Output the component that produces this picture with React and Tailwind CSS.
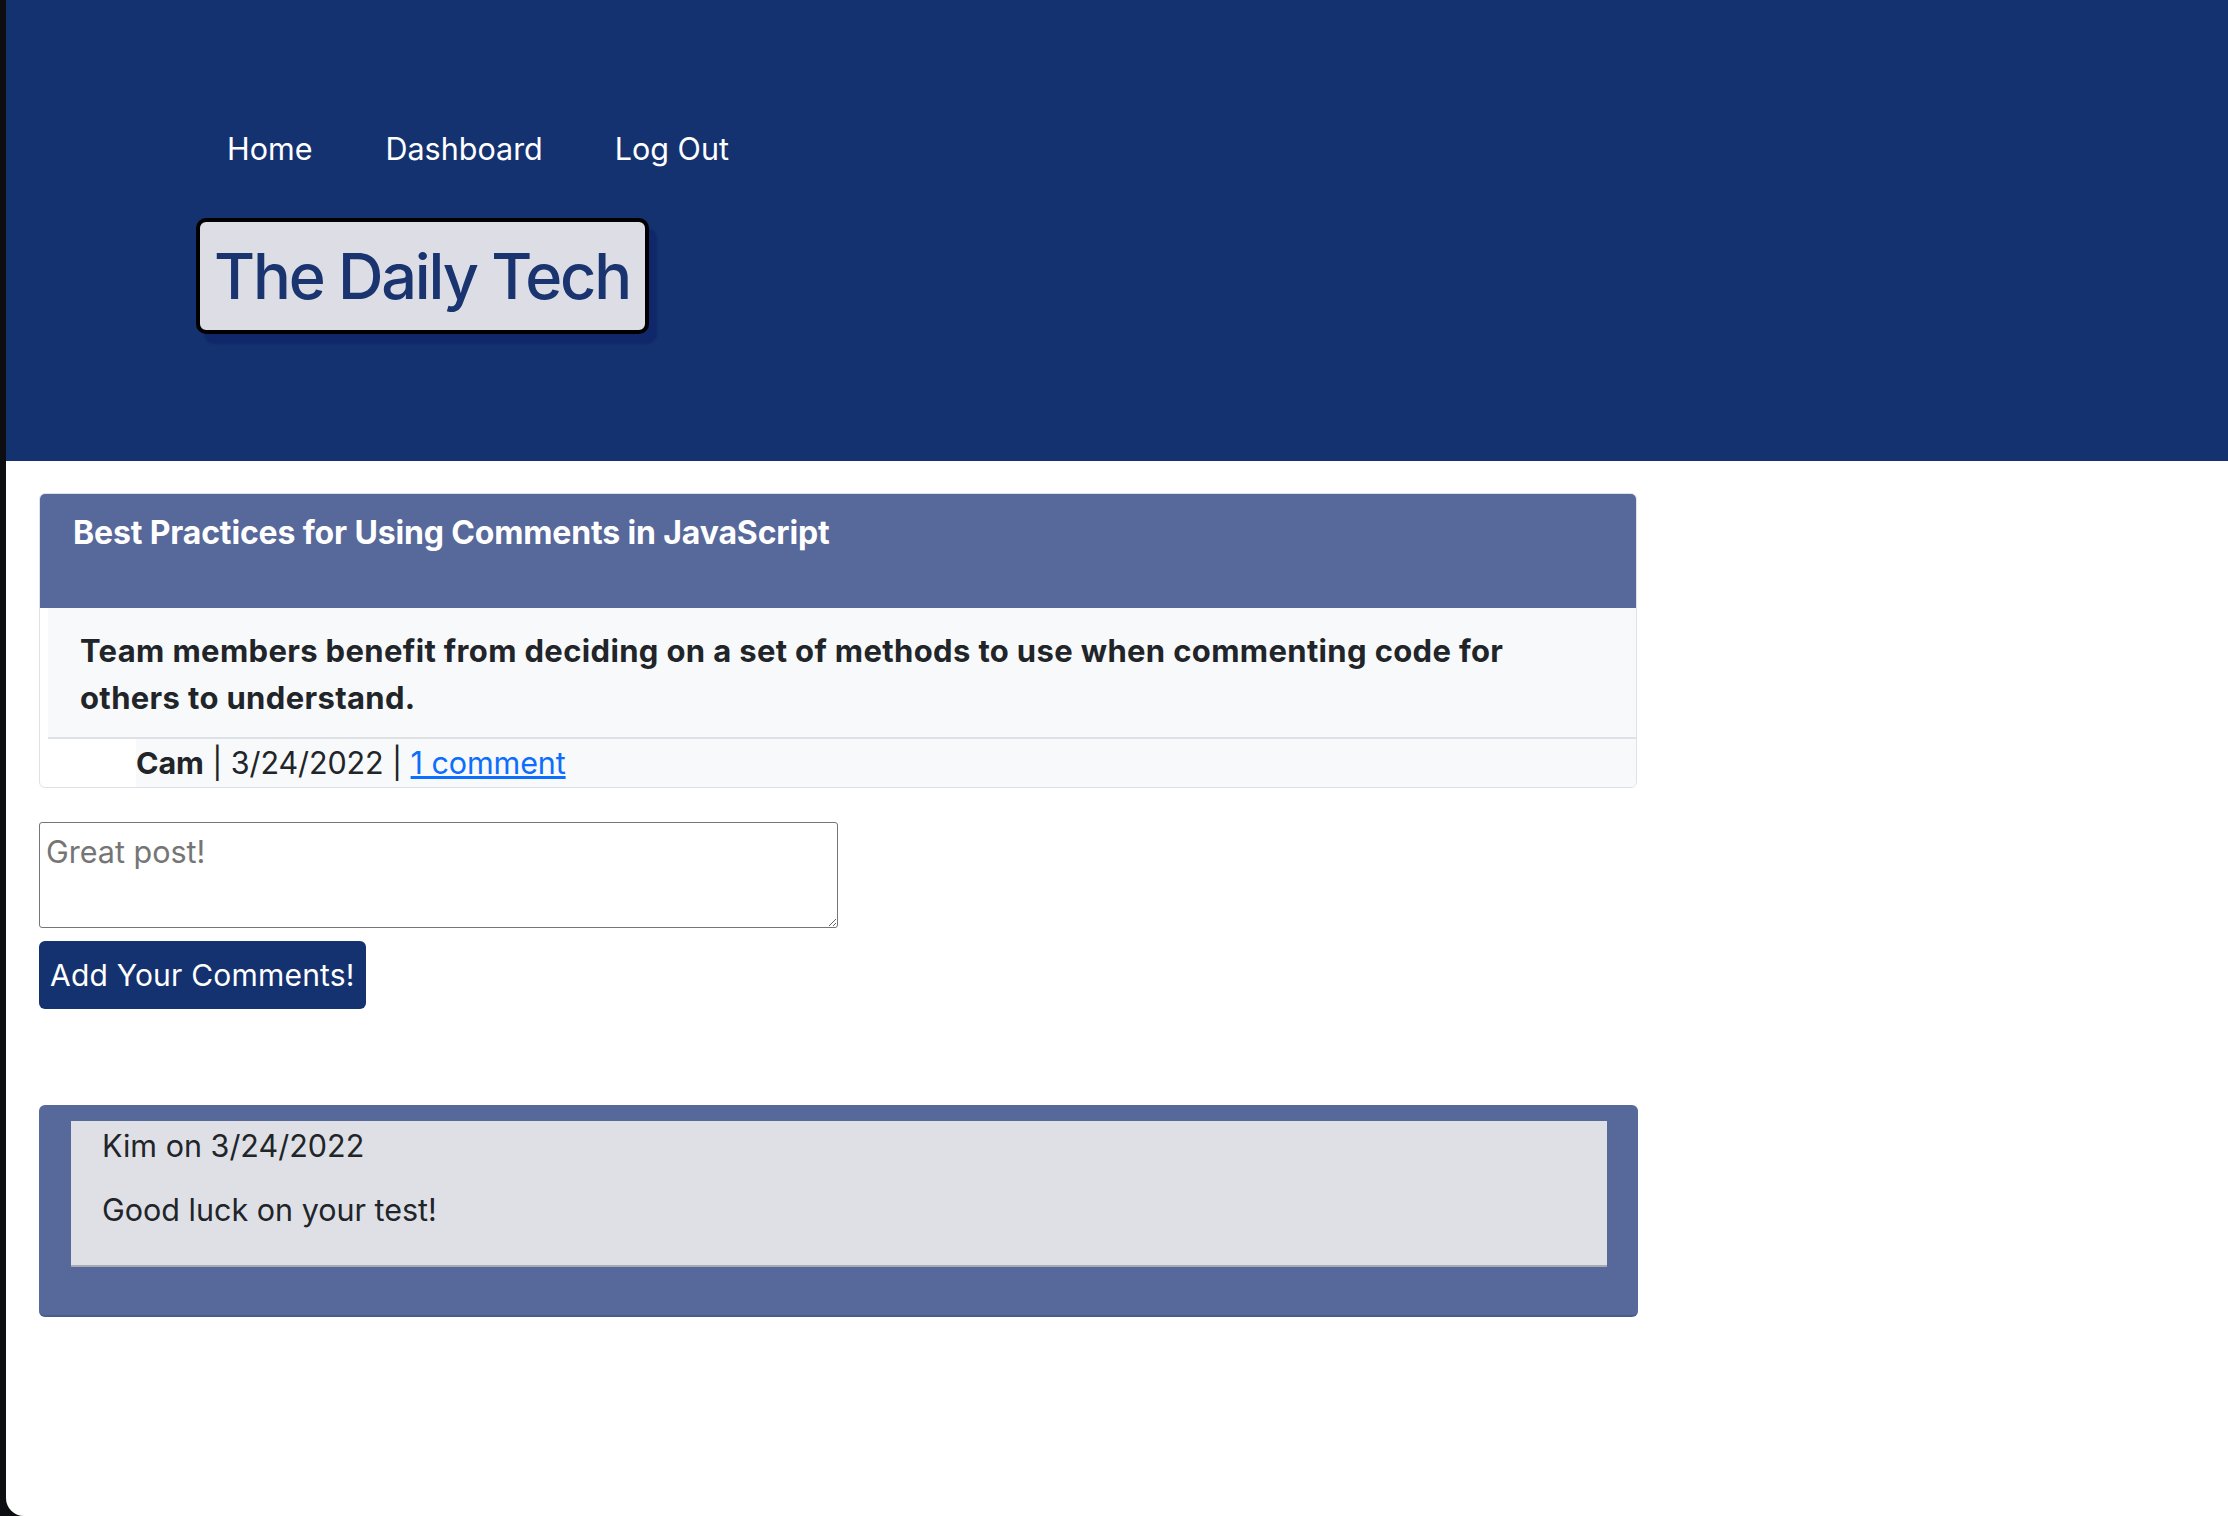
export default function App() {
  return (
    <div className="min-h-[1516px] bg-[#0d0e12] flex" style={{ fontFamily: "Inter, 'Noto Sans', sans-serif" }}>
      <div className="ml-[6px] flex-1 h-[1516px] bg-white rounded-bl-[18px] overflow-hidden">
        {/* Header */}
        <header className="h-[461px] bg-[#153270] pt-[131px]">
          <nav className="flex ml-[184px] text-white text-[30.5px] leading-[36px]">
            <a className="px-[37px]">Home</a>
            <a className="px-[36px]">Dashboard</a>
            <a className="px-[36px]">Log Out</a>
          </nav>
          <div className="ml-[190px] mt-[51px] w-[453px] h-[116px] border-4 border-black rounded-[10px] bg-[#dcdde5] shadow-[8px_10px_2px_#10286a] flex items-center pl-[14px]">
            <h1 className="whitespace-nowrap text-[63px] leading-[77px] font-medium text-[#1a3470] tracking-[-2.2px]">The Daily Tech</h1>
          </div>
        </header>

        <main className="pl-[33px] pt-[32px]">
          {/* Post */}
          <div className="w-[1598px] border border-[#dee2e6] rounded-[6px] overflow-hidden">
            <div className="bg-[#57689a] h-[114px] px-[33px] pt-[20px]">
              <h2 className="text-white font-bold text-[32px] leading-[38px] tracking-[-0.15px]">
                Best Practices for Using Comments in JavaScript
              </h2>
            </div>
            <div className="ml-[8px] bg-[#f8f9fa] px-[32px] pt-[19px] pb-[16px] border-b-2 border-[#dee2e6]">
              <p className="text-[#212529] font-bold text-[31px] leading-[47px] tracking-[0.35px] max-w-[1480px]">
                Team members benefit from deciding on a set of methods to use when commenting code for others to understand.
              </p>
            </div>
            <div className="ml-[96px] bg-[#f8f9fa] h-[48px] flex items-center text-[30.5px] leading-[36px] text-[#212529] tracking-[-0.1px]">
              <span className="font-bold">Cam</span>
              <span className="whitespace-pre"> | 3/24/2022 | </span>
              <a className="text-[#0d6efd] underline">1 comment</a>
            </div>
          </div>

          {/* Comment form */}
          <textarea
            className="block mt-[34px] w-[799px] h-[106px] border border-[#767676] rounded-[3px] px-[6px] pt-[11px] text-[30.5px] leading-[36px] text-[#212529] placeholder:text-[#757575]"
            placeholder="Great post!"
          />
          <button className="block mt-[13px] h-[68px] w-[327px] text-left px-[11px] rounded-[6px] bg-[#153270] text-white text-[30px] leading-[36px] tracking-[0.2px]">
            Add Your Comments!
          </button>

          {/* Comments */}
          <div className="mt-[96px] w-[1599px] pt-[16px] pl-[32px] pr-[31px] pb-[48px] bg-[#57689a] rounded-[6px] border-b-2 border-[#4a5b8c]">
            <div className="bg-[#dee0e6] border-b-2 border-[#a9abb3] pl-[31px] pt-[7px] pb-[37px] text-[#212529] text-[30.5px] leading-[36px]">
              <p className="mb-[28px]">Kim on 3/24/2022</p>
              <p>Good luck on your test!</p>
            </div>
          </div>
        </main>
      </div>
    </div>
  );
}
